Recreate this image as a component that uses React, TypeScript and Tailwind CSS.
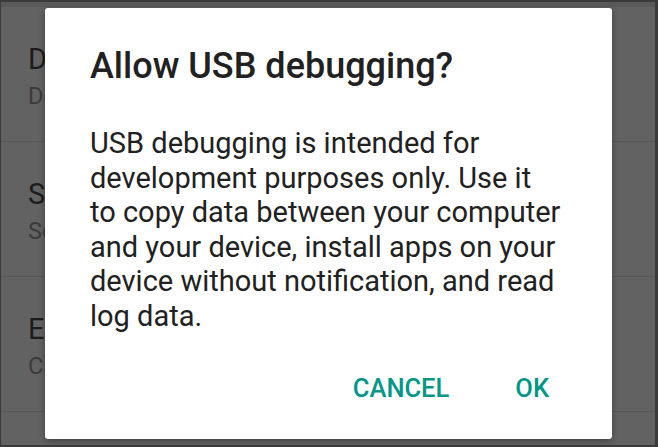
const settings = [
  { title: "Desktop backup password", summary: "Desktop full backups aren't currently protected" },
  { title: "Stay awake", summary: "Screen will never sleep while charging" },
  { title: "Enable Bluetooth HCI snoop log", summary: "Capture all Bluetooth HCI packets in a file" },
];

const bodyLines = [
  "USB debugging is intended for",
  "development purposes only. Use it",
  "to copy data between your computer",
  "and your device, install apps on your",
  "device without notification, and read",
  "log data.",
];

export default function App() {
  return (
    <div className="relative h-[447px] w-[658px] overflow-hidden border-b-2 border-l border-r-[3px] border-t-2 border-[#3a3a3a] bg-[#626262] font-['Roboto',sans-serif]">
      {/* dimmed app bar edge */}
      <div className="h-[5px] bg-[#5a5a5a]" />

      {/* settings list behind the scrim */}
      <div className="flex flex-col">
        {settings.map((item) => (
          <div
            key={item.title}
            className="h-[135px] shrink-0 overflow-hidden whitespace-nowrap border-b border-[#575757] pl-[27px] pt-[35px]"
          >
            <div className="text-[29px] leading-[34px] text-[#1c1c1c]">{item.title}</div>
            <div className="mt-[6px] text-[23.5px] leading-[28px] text-[#3b3b3b]">{item.summary}</div>
          </div>
        ))}
      </div>

      {/* dialog */}
      <div className="absolute left-[44px] top-[6px] w-[567px] rounded-[3px] bg-white pb-[36px] pl-[45px] pt-[37px] shadow-[0_2px_6px_rgba(0,0,0,0.35)]">
        <h1 className="text-[36px] font-medium leading-[42px] text-[#212121]">Allow USB debugging?</h1>
        <p className="mt-[39px] whitespace-nowrap text-[29px] leading-[34.6px] text-[#212121]">
          {bodyLines.map((line) => (
            <span key={line} className="block">
              {line}
            </span>
          ))}
        </p>
        <div className="mt-[40px] flex justify-end gap-[66px] pr-[63px]">
          <button className="text-[25.5px] font-medium uppercase leading-[29px] text-[#009688]">Cancel</button>
          <button className="text-[25.5px] font-medium uppercase leading-[29px] text-[#009688]">OK</button>
        </div>
      </div>
    </div>
  );
}
